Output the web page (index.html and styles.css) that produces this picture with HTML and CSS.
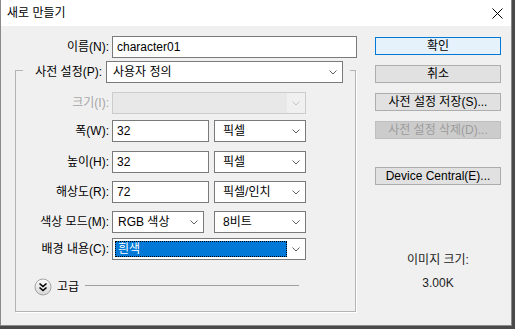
FILE: index.html
```html
<!DOCTYPE html>
<html lang="ko">
<head>
<meta charset="utf-8">
<title>새로 만들기</title>
<link rel="stylesheet" href="styles.css">
</head>
<body>
<div class="window">
  <div class="titlebar">
    <span class="title">새로 만들기</span>
    <svg class="close" width="11" height="11" viewBox="0 0 11 11"><path d="M0.5 0.5 L10.5 10.5 M10.5 0.5 L0.5 10.5" stroke="#000" stroke-width="1" fill="none"/></svg>
  </div>
  <div class="content">
    <div class="form">
      <div class="row row-name">
        <span class="lbl lbl-name">이름(N):</span>
        <div class="field w-name">character01</div>
      </div>
      <div class="group">
        <div class="legend">
          <span class="lbl lbl-legend">사전 설정(P):</span>
          <div class="field select w-preset"><span>사용자 정의</span><svg class="chev" width="8" height="5" viewBox="0 0 8 5"><polyline points="0.5,0.5 4,4 7.5,0.5" fill="none" stroke="#606060"/></svg></div>
        </div>
        <div class="row mt9">
          <span class="lbl disabled">크기(I):</span>
          <div class="field select disabled-field w-wide"><span></span><span class="chev-box"><svg class="chev" width="8" height="5" viewBox="0 0 8 5"><polyline points="0.5,0.5 4,4 7.5,0.5" fill="none" stroke="#c4c4c4"/></svg></span></div>
        </div>
        <div class="row mt6">
          <span class="lbl">폭(W):</span>
          <div class="field w-num">32</div>
          <div class="field select pad8 w-unit"><span>픽셀</span><svg class="chev" width="8" height="5" viewBox="0 0 8 5"><polyline points="0.5,0.5 4,4 7.5,0.5" fill="none" stroke="#606060"/></svg></div>
        </div>
        <div class="row mt9">
          <span class="lbl">높이(H):</span>
          <div class="field w-num">32</div>
          <div class="field select pad8 w-unit"><span>픽셀</span><svg class="chev" width="8" height="5" viewBox="0 0 8 5"><polyline points="0.5,0.5 4,4 7.5,0.5" fill="none" stroke="#606060"/></svg></div>
        </div>
        <div class="row mt8">
          <span class="lbl">해상도(R):</span>
          <div class="field w-num">72</div>
          <div class="field select pad8 w-unit"><span>픽셀/인치</span><svg class="chev" width="8" height="5" viewBox="0 0 8 5"><polyline points="0.5,0.5 4,4 7.5,0.5" fill="none" stroke="#606060"/></svg></div>
        </div>
        <div class="row mt8">
          <span class="lbl">색상 모드(M):</span>
          <div class="field select w-mode"><span>RGB 색상</span><svg class="chev" width="8" height="5" viewBox="0 0 8 5"><polyline points="0.5,0.5 4,4 7.5,0.5" fill="none" stroke="#606060"/></svg></div>
          <div class="field select pad8 w-unit gap10"><span>8비트</span><svg class="chev" width="8" height="5" viewBox="0 0 8 5"><polyline points="0.5,0.5 4,4 7.5,0.5" fill="none" stroke="#606060"/></svg></div>
        </div>
        <div class="row mt5">
          <span class="lbl">배경 내용(C):</span>
          <div class="field select focus w-wide"><span class="hl">흰색</span><svg class="chev" width="8" height="5" viewBox="0 0 8 5"><polyline points="0.5,0.5 4,4 7.5,0.5" fill="none" stroke="#606060"/></svg></div>
        </div>
        <div class="adv">
          <svg class="adv-icon" width="18" height="18" viewBox="0 0 18 18">
            <defs><linearGradient id="g" x1="0" y1="0" x2="0" y2="1"><stop offset="0" stop-color="#fdfdfd"/><stop offset="1" stop-color="#d6d6d6"/></linearGradient></defs>
            <circle cx="9" cy="9" r="8" fill="url(#g)" stroke="#a3a3a3"/>
            <polyline points="5.5,5.5 9,8.5 12.5,5.5" fill="none" stroke="#000" stroke-width="1.6"/>
            <polyline points="5.5,9.5 9,12.5 12.5,9.5" fill="none" stroke="#000" stroke-width="1.6"/>
          </svg>
          <span class="adv-text">고급</span>
          <span class="adv-line"></span>
        </div>
      </div>
    </div>
    <div class="side">
      <div class="btn btn-default">확인</div>
      <div class="btn">취소</div>
      <div class="btn">사전 설정 저장(S)...</div>
      <div class="btn btn-disabled">사전 설정 삭제(D)...</div>
      <div class="btn btn-device">Device Central(E)...</div>
      <div class="imgsize">이미지 크기:</div>
      <div class="imgval">3.00K</div>
    </div>
  </div>
</div>
</body>
</html>
```
FILE: styles.css
```css
html, body {
  margin: 0;
  padding: 0;
}
body {
  width: 515px;
  height: 329px;
  overflow: hidden;
  background: #4a4a4a;
  font-family: "Liberation Sans", "Noto Sans CJK KR", sans-serif;
  font-size: 12px;
  line-height: 16px;
  color: #000;
}
.window {
  width: 512px;
  height: 326px;
  box-sizing: border-box;
  border: 1px solid #8a8a8a;
  border-top: none;
  background: #f0f0f0;
}
.titlebar {
  height: 26px;
  background: #fff;
  display: flex;
  align-items: center;
  justify-content: space-between;
  padding: 0 8px 0 6px;
}
.title {
  font-size: 12px;
}
.content {
  display: flex;
  padding-top: 10px;
}
.form {
  width: 374px;
}
.row {
  display: flex;
  align-items: center;
}
.lbl {
  width: 96px;
  box-sizing: border-box;
  text-align: right;
  padding-right: 3px;
  white-space: nowrap;
}
.lbl-name {
  width: 111px;
}
.lbl.disabled {
  color: #a6a6a6;
}
.field {
  height: 22px;
  box-sizing: border-box;
  border: 1px solid #7a7a7a;
  background: #fff;
  padding-left: 4px;
  display: flex;
  align-items: center;
  white-space: nowrap;
}
.select {
  justify-content: space-between;
  padding-right: 5px;
  padding-left: 5px;
}
.select.pad8 {
  padding-left: 8px;
}
.w-name { width: 245px; }
.w-preset { width: 237px; padding-left: 6px; }
.w-wide { width: 194px; }
.w-num { width: 97px; }
.w-unit { width: 92px; margin-left: 5px; }
.w-mode { width: 92px; }
.w-unit.gap10 { margin-left: 10px; }
.chev {
  display: block;
}
.disabled-field {
  background: #e8e8e8;
  border-color: #cccccc;
  padding-right: 0;
}
.chev-box {
  width: 18px;
  height: 20px;
  background: #f0f0f0;
  display: flex;
  align-items: center;
  justify-content: center;
}
.focus {
  padding-left: 2px;
}
.hl {
  flex: none;
  width: 172px;
  height: 16px;
  box-sizing: border-box;
  background: #0078d7;
  border: 1px dotted #000;
  color: #fff;
  padding-left: 2px;
  line-height: 14px;
}
.group {
  margin: 12px 0 0 14px;
  width: 341px;
  height: 242px;
  box-sizing: border-box;
  border: 1px solid #b4b4b4;
  box-shadow: 1px 1px 0 #fff;
}
.legend {
  margin: -10px 0 0 7px;
  width: 327px;
  background: #f0f0f0;
  display: flex;
  align-items: center;
}
.lbl-legend {
  width: 83px;
  padding-right: 4px;
}
.mt5 { margin-top: 5px; }
.mt6 { margin-top: 6px; }
.mt8 { margin-top: 8px; }
.mt9 { margin-top: 9px; }
.adv {
  display: flex;
  align-items: center;
  margin: 18px 0 0 18px;
  height: 18px;
}
.adv-icon {
  display: block;
}
.adv-text {
  margin-left: 5px;
}
.adv-line {
  width: 214px;
  height: 1px;
  background: #a0a0a0;
  margin-left: 6px;
  margin-bottom: 3px;
}
.side {
  width: 126px;
  display: flex;
  flex-direction: column;
  padding-top: 1px;
}
.btn {
  height: 18px;
  box-sizing: border-box;
  border: 1px solid #adadad;
  background: #e1e1e1;
  display: flex;
  align-items: center;
  justify-content: center;
  margin-bottom: 10px;
  white-space: nowrap;
}
.btn-default {
  border-color: #0078d7;
  background: #e5f1fb;
}
.btn-disabled {
  background: #cccccc;
  border-color: #bfbfbf;
  color: #9c9c9c;
  margin-bottom: 28px;
}
.btn-device {
  margin-bottom: 0;
}
.imgsize {
  margin-top: 67px;
  text-align: center;
  color: #222;
}
.imgval {
  margin-top: 7px;
  text-align: center;
  color: #222;
}
```
